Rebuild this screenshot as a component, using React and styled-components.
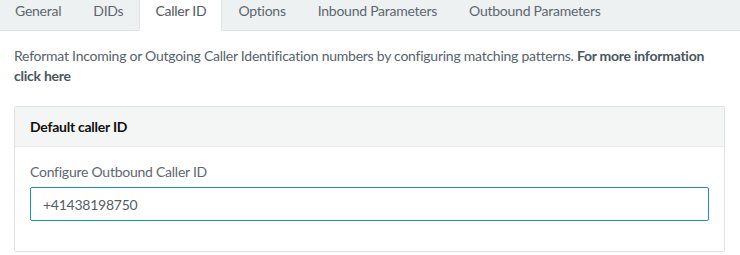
import React from "react";
import styled, { createGlobalStyle } from "styled-components";

const Global = createGlobalStyle`
  html, body { margin: 0; padding: 0; background: #fff; }
  body {
    font-family: "Lato", "Open Sans", sans-serif;
    font-size: 14px;
    letter-spacing: -0.25px;
    color: #58626b;
  }
  * { box-sizing: border-box; }
`;

const Page = styled.div`
  width: 740px;
  height: 255px;
  overflow: hidden;
  background: #fff;
`;

const TabBar = styled.div`
  display: flex;
  height: 31px;
  background: #eef1f2;
  border-bottom: 1px solid #dde3e6;
`;

const Tab = styled.div`
  height: 31px;
  padding: 1px 15px 0;
  line-height: 20px;
  border: 1px solid ${(p) => (p.$active ? "#dde3e6" : "transparent")};
  border-top: none;
  border-bottom-color: ${(p) => (p.$active ? "#fff" : "transparent")};
  background: ${(p) => (p.$active ? "#fff" : "transparent")};
  color: ${(p) => (p.$active ? "#4f5a64" : "#5d6770")};
  margin-left: ${(p) => (p.$first ? "-1px" : "0")};
  white-space: nowrap;
`;

const Content = styled.div`
  padding: 15px 15px 0 14px;
`;

const Intro = styled.p`
  margin: 0;
  line-height: 20px;
  color: #58626b;
`;

const Strong = styled.a`
  font-weight: 700;
  color: #4a5560;
  text-decoration: none;
`;

const Panel = styled.section`
  margin-top: 20px;
  border: 1px solid #dde3e6;
  border-radius: 2px;
`;

const PanelHeader = styled.header`
  height: 40px;
  padding: 0 15px;
  display: flex;
  align-items: center;
  background: #f4f6f6;
  border-bottom: 1px solid #e6eaeb;
  font-weight: 700;
  color: #111;
`;

const PanelBody = styled.div`
  padding: 15px 15px 30px;
`;

const Label = styled.label`
  display: block;
  line-height: 20px;
  margin-bottom: 5px;
  color: #5d6770;
`;

const Input = styled.input`
  display: block;
  width: 100%;
  height: 34px;
  padding: 0 12px;
  border: 1px solid #1a8fcc;
  border-radius: 2px;
  font: inherit;
  letter-spacing: inherit;
  color: #555d65;
  outline: none;
`;

const tabs = ["General", "DIDs", "Caller ID", "Options", "Inbound Parameters", "Outbound Parameters"];

export default function App() {
  return (
    <Page>
      <Global />
      <TabBar>
        {tabs.map((t, i) => (
          <Tab key={t} $active={t === "Caller ID"} $first={i === 0}>
            {t}
          </Tab>
        ))}
      </TabBar>
      <Content>
        <Intro>
          Reformat Incoming or Outgoing Caller Identification numbers by configuring matching patterns.{" "}
          <Strong href="#">For more information</Strong>
          <br />
          <Strong href="#">click here</Strong>
        </Intro>
        <Panel>
          <PanelHeader>Default caller ID</PanelHeader>
          <PanelBody>
            <Label>Configure Outbound Caller ID</Label>
            <Input defaultValue="+41438198750" />
          </PanelBody>
        </Panel>
      </Content>
    </Page>
  );
}
